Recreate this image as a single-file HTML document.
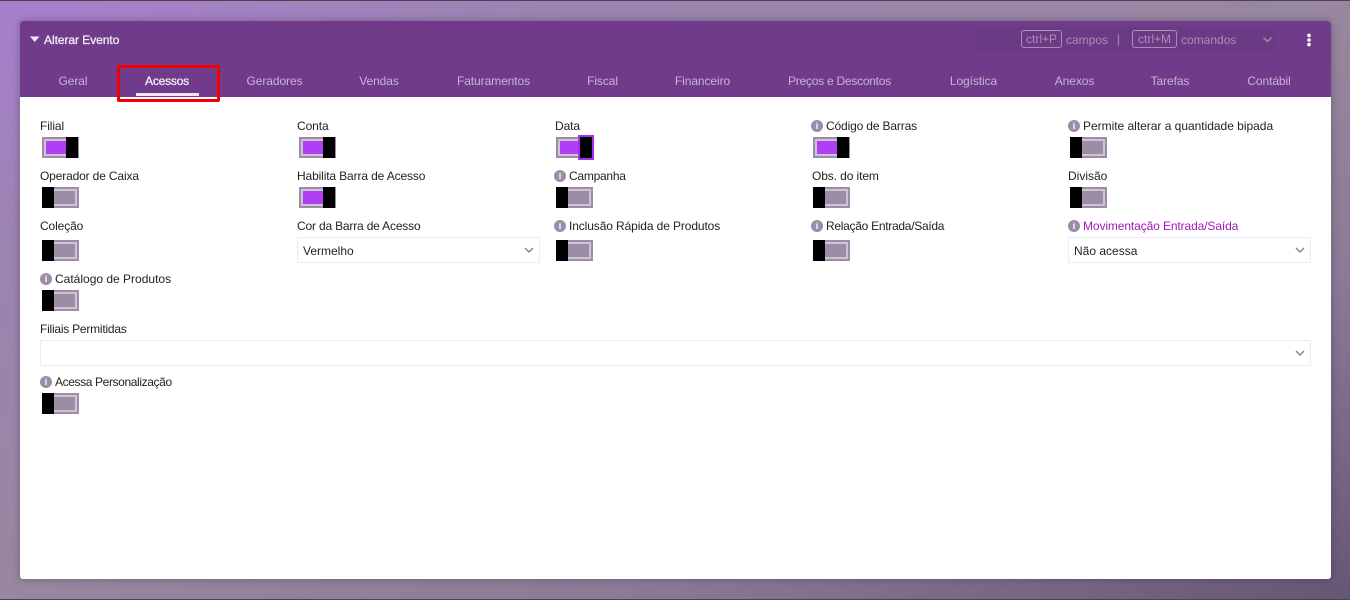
<!DOCTYPE html>
<html lang="pt-BR">
<head>
<meta charset="utf-8">
<title>Alterar Evento</title>
<style>
*,*::before,*::after{box-sizing:border-box}
html,body{margin:0;padding:0;width:1350px;height:600px;overflow:hidden}
body{position:relative;background:linear-gradient(to bottom right,#a87fce 0%,#9b84b0 22%,#98879f 50%,#8d7a96 72%,#665676 100%);font-family:"Liberation Sans",sans-serif;font-size:12px;color:#222}
.topline{position:absolute;left:0;top:0;width:1350px;height:1px;background:#4a4450}
.botline{position:absolute;left:0;top:599px;width:1350px;height:1px;background:#4a4450}
.card{position:absolute;left:20px;top:21px;width:1311px;height:558px;background:#fff;border-radius:3px;box-shadow:0 0 8px rgba(40,20,50,.35)}
.head{position:absolute;left:0;top:0;width:1311px;height:76px;background:#703b8b;border-radius:3px 3px 0 0}
.abs{position:absolute;white-space:nowrap;line-height:16px}
.title{color:#f3ecf6;font-size:12px;-webkit-text-stroke:.3px #f3ecf6;letter-spacing:-.05px}
.tab{position:absolute;top:52px;color:#c9b3d4;font-size:12px;line-height:16px;white-space:nowrap;transform:translateX(-50%);letter-spacing:-.08px}
.cmd{position:absolute;left:957px;top:6px;width:300px;height:24px;background:#6b3a84;border-radius:3px}
.key{position:absolute;top:9px;height:18px;border:1px solid #a98fb6;border-radius:3px;color:#a98fb6;font-size:12px;line-height:17px;text-align:center}
.mut{color:#a98fb6;font-size:12px}
.red{position:absolute;left:117px;top:65px;width:103px;height:37px;border:3px solid #f00000;border-radius:2px;z-index:3}
.ul{position:absolute;left:136px;top:93px;width:63px;height:3px;background:#f1e4f6;z-index:2}
.lb{position:absolute;white-space:nowrap;line-height:16px;font-size:12px;color:#222}
.i{position:absolute;width:12px;height:12px;border-radius:50%;background:#9d8ca8;color:#fff;font:bold 9px/12px "Liberation Sans",sans-serif;text-align:center}
.t{position:absolute;width:37px;height:21px;background:#9d8ca5}
.t::before{content:"";position:absolute;left:2px;top:2px;width:33px;height:17px;border:2px solid #cfc4d6}
.t::after{content:"";position:absolute;top:0;width:12px;height:21px;background:#000}
.t.off::after{left:0}
.t.on::before{background:#b03ef5}
.t.on::after{right:1px}
.t.focus::after{left:22px;right:auto;top:-2px;width:16px;height:25px;background:#000;border:2px solid #a92ff0}
.sel{position:absolute;height:26px;border:1px solid #ecebf3;background:#fff;font-size:12px;line-height:26px;padding-left:5px;color:#222}
.sel svg{position:absolute;right:4px;top:8px}
</style>
</head>
<body>
<div class="topline"></div>
<div class="botline"></div>
<div class="card">
  <div class="head">
    <svg style="position:absolute;left:10px;top:15px" width="10" height="7" viewBox="0 0 10 7"><path d="M0 0.5H9.5L4.75 6Z" fill="#f3ecf6"/></svg>
    <div class="abs title" style="left:24px;top:11px">Alterar Evento</div>
    <div class="cmd"></div>
    <div class="key" style="left:1001px;width:41px">ctrl+P</div>
    <div class="abs mut" style="left:1046px;top:11px">campos</div>
    <div class="abs mut" style="left:1097px;top:10px">|</div>
    <div class="key" style="left:1112px;width:45px">ctrl+M</div>
    <div class="abs mut" style="left:1161px;top:11px">comandos</div>
    <svg style="position:absolute;left:1241px;top:15px" width="13" height="8" viewBox="0 0 13 8"><path d="M2.5 1.5L6.5 5.5L10.5 1.5" fill="none" stroke="#9a80a8" stroke-width="1.6"/></svg>
    <svg style="position:absolute;left:1287px;top:12px" width="4" height="14" viewBox="0 0 4 14"><circle cx="2" cy="2.4" r="1.8" fill="#fff"/><circle cx="2" cy="7" r="1.8" fill="#fff"/><circle cx="2" cy="11.6" r="1.8" fill="#fff"/></svg>
    <div class="tab" style="left:53px">Geral</div>
    <div class="tab" style="left:147px;color:#f3ecf6;-webkit-text-stroke:.3px #f3ecf6;letter-spacing:-.2px">Acessos</div>
    <div class="tab" style="left:254.5px">Geradores</div>
    <div class="tab" style="left:359px">Vendas</div>
    <div class="tab" style="left:473.5px">Faturamentos</div>
    <div class="tab" style="left:582.5px">Fiscal</div>
    <div class="tab" style="left:682.5px">Financeiro</div>
    <div class="tab" style="left:819.5px;letter-spacing:-.25px">Preços e Descontos</div>
    <div class="tab" style="left:953.5px">Logística</div>
    <div class="tab" style="left:1054.5px">Anexos</div>
    <div class="tab" style="left:1150px">Tarefas</div>
    <div class="tab" style="left:1249px">Contábil</div>
  </div>
</div>
<div class="red"></div>
<div class="ul"></div>

<div class="lb" style="left:40px;top:118px;letter-spacing:-.1px">Filial</div>
<div class="t on" style="left:42px;top:137px"></div>
<div class="lb" style="left:297px;top:118px;letter-spacing:-.1px">Conta</div>
<div class="t on" style="left:299px;top:137px"></div>
<div class="lb" style="left:555px;top:118px;letter-spacing:-.1px">Data</div>
<div class="t on focus" style="left:556px;top:137px"></div>
<div class="i" style="left:811px;top:120px">i</div>
<div class="lb" style="left:826px;top:118px;letter-spacing:-.15px">Código de Barras</div>
<div class="t on" style="left:813px;top:137px"></div>
<div class="i" style="left:1068px;top:120px">i</div>
<div class="lb" style="left:1083px;top:118px;letter-spacing:-.02px">Permite alterar a quantidade bipada</div>
<div class="t off" style="left:1070px;top:137px"></div>

<div class="lb" style="left:40px;top:168px;letter-spacing:-.15px">Operador de Caixa</div>
<div class="t off" style="left:42px;top:187px"></div>
<div class="lb" style="left:297px;top:168px;letter-spacing:-.13px">Habilita Barra de Acesso</div>
<div class="t on" style="left:299px;top:187px"></div>
<div class="i" style="left:554px;top:170px">i</div>
<div class="lb" style="left:569px;top:168px;letter-spacing:-.25px">Campanha</div>
<div class="t off" style="left:556px;top:187px"></div>
<div class="lb" style="left:812px;top:168px;letter-spacing:-.1px">Obs. do item</div>
<div class="t off" style="left:813px;top:187px"></div>
<div class="lb" style="left:1068px;top:168px">Divisão</div>
<div class="t off" style="left:1070px;top:187px"></div>

<div class="lb" style="left:40px;top:218px;letter-spacing:-.12px">Coleção</div>
<div class="t off" style="left:42px;top:240px"></div>
<div class="lb" style="left:297px;top:218px;letter-spacing:-.18px">Cor da Barra de Acesso</div>
<div class="sel" style="left:297px;top:237px;width:243px">Vermelho<svg width="12" height="8" viewBox="0 0 12 8"><path d="M2 2L6 6L10 2" fill="none" stroke="#888" stroke-width="1.5"/></svg></div>
<div class="i" style="left:554px;top:220px">i</div>
<div class="lb" style="left:569px;top:218px;letter-spacing:-.11px">Inclusão Rápida de Produtos</div>
<div class="t off" style="left:556px;top:240px"></div>
<div class="i" style="left:811px;top:220px">i</div>
<div class="lb" style="left:826px;top:218px;letter-spacing:-.28px">Relação Entrada/Saída</div>
<div class="t off" style="left:813px;top:240px"></div>
<div class="i" style="left:1068px;top:220px">i</div>
<div class="lb" style="left:1083px;top:218px;color:#a319b8;letter-spacing:-.11px">Movimentação Entrada/Saída</div>
<div class="sel" style="left:1068px;top:237px;width:243px">Não acessa<svg width="12" height="8" viewBox="0 0 12 8"><path d="M2 2L6 6L10 2" fill="none" stroke="#888" stroke-width="1.5"/></svg></div>

<div class="i" style="left:40px;top:273px">i</div>
<div class="lb" style="left:55px;top:271px">Catálogo de Produtos</div>
<div class="t off" style="left:42px;top:290px"></div>

<div class="lb" style="left:40px;top:321px;letter-spacing:-.23px">Filiais Permitidas</div>
<div class="sel" style="left:40px;top:340px;width:1271px"><svg width="12" height="8" viewBox="0 0 12 8"><path d="M2 2L6 6L10 2" fill="none" stroke="#888" stroke-width="1.5"/></svg></div>

<div class="i" style="left:40px;top:376px">i</div>
<div class="lb" style="left:55px;top:374px;letter-spacing:-.38px">Acessa Personalização</div>
<div class="t off" style="left:42px;top:393px"></div>
</body>
</html>
